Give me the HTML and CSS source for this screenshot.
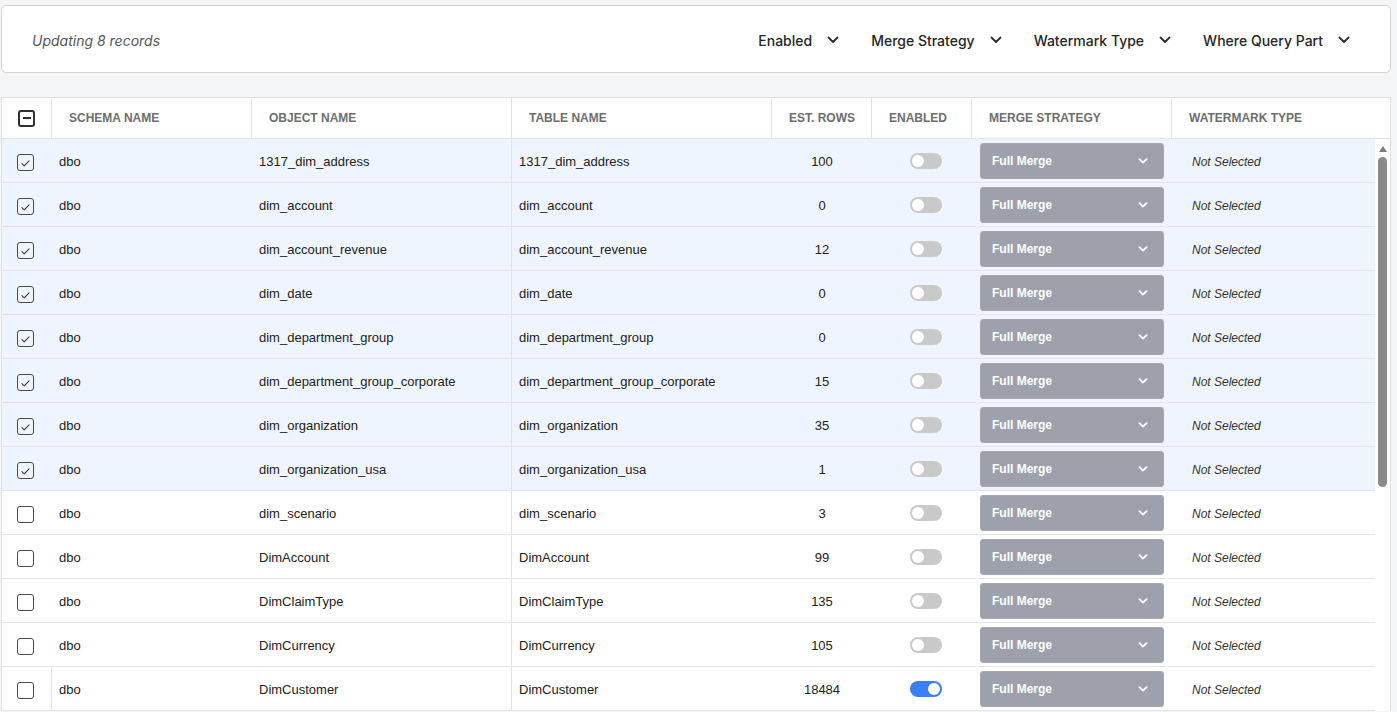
FILE: index.html
```html
<!DOCTYPE html>
<html lang="en">
  <head>
    <meta charset="UTF-8" />
    <meta name="viewport" content="width=device-width, initial-scale=1.0" />
    <title>Bulk Update</title>
    <link rel="stylesheet" href="styles.css">
  </head>
  <body>
    <div class="page">
      <div class="toolbar">
        <div class="status">Updating 8 records</div>
        <div class="filters">
          <div class="filter">Enabled <svg class="chev" viewBox="0 0 12 8"><path d="M1.5 1.5l4.5 4.5 4.5-4.5"/></svg></div>
          <div class="filter">Merge Strategy <svg class="chev" viewBox="0 0 12 8"><path d="M1.5 1.5l4.5 4.5 4.5-4.5"/></svg></div>
          <div class="filter">Watermark Type <svg class="chev" viewBox="0 0 12 8"><path d="M1.5 1.5l4.5 4.5 4.5-4.5"/></svg></div>
          <div class="filter">Where Query Part <svg class="chev" viewBox="0 0 12 8"><path d="M1.5 1.5l4.5 4.5 4.5-4.5"/></svg></div>
        </div>
      </div>

      <div class="grid">
        <div class="grid-head">
          <div class="head-cell head-check"><span class="box box-partial"><span class="dash"></span></span></div>
          <div class="head-cell">Schema Name</div>
          <div class="head-cell">Object Name</div>
          <div class="head-cell">Table Name</div>
          <div class="head-cell">Est. Rows</div>
          <div class="head-cell">Enabled</div>
          <div class="head-cell">Merge Strategy</div>
          <div class="head-cell">Watermark Type</div>
        </div>

        <div class="grid-body">
          <div class="rows" id="rows"></div>
          <div class="scrollbar">
            <span class="scroll-up"></span>
            <span class="scroll-thumb"></span>
          </div>
        </div>
      </div>
    </div>

    <script>
      // rows shown in the bulk-update grid
      const records = [
        ["1317_dim_address", 100, true, false],
        ["dim_account", 0, true, false],
        ["dim_account_revenue", 12, true, false],
        ["dim_date", 0, true, false],
        ["dim_department_group", 0, true, false],
        ["dim_department_group_corporate", 15, true, false],
        ["dim_organization", 35, true, false],
        ["dim_organization_usa", 1, true, false],
        ["dim_scenario", 3, false, false],
        ["DimAccount", 99, false, false],
        ["DimClaimType", 135, false, false],
        ["DimCurrency", 105, false, false],
        ["DimCustomer", 18484, false, true]
      ];

      const check = '<svg viewBox="0 0 16 16"><path d="M4.2 9.2l2.4 2.4 5.2-5.4"/></svg>';
      const caret = '<svg class="caret" viewBox="0 0 10 6"><path d="M1.5 1.2l3.5 3.4 3.5-3.4"/></svg>';
      const body = document.getElementById("rows");

      body.innerHTML = records
        .map(([name, rows, selected, enabled]) => `
          <div class="row${selected ? " selected" : ""}">
            <div class="cell cell-check"><span class="box">${selected ? check : ""}</span></div>
            <div class="cell text">dbo</div>
            <div class="cell text split">${name}</div>
            <div class="cell text">${name}</div>
            <div class="cell text num">${rows}</div>
            <div class="cell cell-toggle"><span class="toggle${enabled ? " on" : ""}"></span></div>
            <div class="cell cell-select"><div class="select"><span>Full Merge</span>${caret}</div></div>
            <div class="cell text muted">Not Selected</div>
          </div>`)
        .join("");
    </script>
  </body>
</html>
```

FILE: styles.css
```css
* {
  box-sizing: border-box;
}

html,
body {
  margin: 0;
  height: 100%;
  overflow: hidden;
  background-color: #f5f6f8;
  font-family: "Liberation Sans", Arial, sans-serif;
}

.page {
  padding: 5px 6px 0 1px;
}

/* top bar */

.toolbar {
  display: flex;
  align-items: center;
  justify-content: space-between;
  height: 68px;
  padding: 2px 40px 0 30px;
  background-color: #fff;
  border: 1px solid #d3d4d6;
  border-radius: 5px;
  font-family: Inter, "Liberation Sans", sans-serif;
}

.status {
  font-size: 14px;
  font-style: italic;
  color: #565656;
}

.filters {
  display: flex;
  gap: 32px;
}

.filter {
  display: flex;
  align-items: center;
  gap: 15px;
  font-size: 14px;
  font-weight: 500;
  color: #262626;
}

.chev {
  width: 12px;
  height: 8px;
  fill: none;
  stroke: #2d2d2d;
  stroke-width: 1.8;
  stroke-linecap: round;
  stroke-linejoin: round;
}

/* grid */

.grid {
  margin-top: 24px;
  background-color: #fff;
  border: 1px solid #dedfe1;
  border-bottom: none;
}

.grid-head,
.row {
  display: grid;
  grid-template-columns: 50px 200px 260px 260px 100px 100px 200px 1fr;
}

.grid-head {
  height: 41px;
  border-bottom: 1px solid #e2e3e5;
}

.head-cell {
  display: flex;
  align-items: center;
  padding-left: 17px;
  border-right: 1px solid #e2e3e5;
  font-size: 12px;
  font-weight: bold;
  text-transform: uppercase;
  color: #6e6e6e;
}

.head-cell:last-child {
  border-right: none;
}

.head-check {
  padding-left: 16px;
}

.grid-body {
  display: flex;
}

.rows {
  flex: 1;
}

/* scrollbar gutter beside the rows */

.scrollbar {
  display: flex;
  flex-direction: column;
  align-items: center;
  width: 15px;
  padding-top: 7px;
  background-color: #fff;
}

.scroll-up {
  width: 0;
  height: 0;
  border-left: 4px solid transparent;
  border-right: 4px solid transparent;
  border-bottom: 6px solid #7c7c7c;
}

.scroll-thumb {
  width: 9px;
  height: 330px;
  margin-top: 5px;
  border-radius: 5px;
  background-color: #8a8a8a;
}

.row {
  height: 44px;
  border-bottom: 1px solid #e3e4e6;
  font-size: 13px;
  color: #222;
}

.row.selected {
  background-color: #eef5fe;
}

.row:last-child .cell-check {
  border-right: 1px solid #e3e4e6;
}

.cell {
  display: flex;
  align-items: center;
  padding: 0 7px;
  white-space: nowrap;
}

.text {
  padding-top: 2px;
}

.split {
  border-right: 1px solid #e3e4e6;
}

.num {
  justify-content: center;
}

.muted {
  padding-left: 20px;
  font-size: 12px;
  font-style: italic;
  color: #333;
}

/* checkboxes */

.cell-check {
  padding: 3px 0 0 15px;
}

.box {
  display: flex;
  align-items: center;
  justify-content: center;
  width: 17px;
  height: 17px;
  border: 1.5px solid #4d4a47;
  border-radius: 3px;
}

.box svg {
  width: 15px;
  height: 15px;
  fill: none;
  stroke: #3a3a3a;
  stroke-width: 1.1;
  stroke-linecap: round;
  stroke-linejoin: round;
}

.box-partial {
  width: 17px;
  height: 17px;
  border: 2px solid #2f2f2f;
}

.dash {
  width: 8px;
  height: 2px;
  background-color: #2f2f2f;
}

/* toggle */

.cell-toggle {
  padding: 1px 0 0 38px;
}

.toggle {
  position: relative;
  width: 32px;
  height: 16px;
  border-radius: 8px;
  background-color: #c9c9c9;
}

.toggle::after {
  content: "";
  position: absolute;
  top: 2px;
  left: 2px;
  width: 12px;
  height: 12px;
  border-radius: 50%;
  background-color: #fff;
}

.toggle.on {
  background-color: #3b7ff5;
}

.toggle.on::after {
  left: 18px;
}

/* merge strategy select */

.cell-select {
  padding-left: 8px;
}

.select {
  display: flex;
  align-items: center;
  justify-content: space-between;
  width: 184px;
  height: 36px;
  padding: 1px 15px 0 11px;
  background-color: #9da1ab;
  border: 1px solid #a4a8b1;
  border-radius: 3px;
  font-size: 12px;
  font-weight: bold;
  color: #fff;
}

.caret {
  width: 10px;
  height: 6px;
  fill: none;
  stroke: #fff;
  stroke-width: 1.8;
  stroke-linecap: round;
  stroke-linejoin: round;
}
```
